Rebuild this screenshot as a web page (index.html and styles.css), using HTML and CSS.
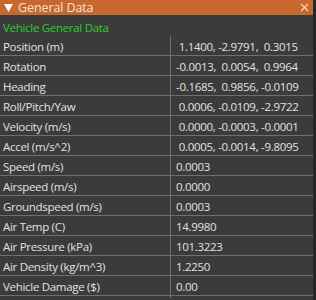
FILE: index.html
```html
<!DOCTYPE html>
<html lang="en">
<head>
    <meta charset="UTF-8">
    <title>General Data</title>
    <link rel="stylesheet" href="styles.css">
</head>
<body>
    <div class="window">
        <div class="titlebar">
            <svg class="arrow" width="9" height="8" viewBox="0 0 9 8"><polygon points="0,0 9,0 4.5,8" fill="#fff"/></svg>
            <span class="title">General Data</span>
            <svg class="close" width="9" height="9" viewBox="0 0 9 9"><path d="M1 1 L8 8 M8 1 L1 8" stroke="#f6d3b6" stroke-width="1.3"/></svg>
        </div>
        <div class="content">
            <div class="section">Vehicle General Data</div>
            <div class="table">
                <div class="row"><div class="label">Position (m)</div><div class="value"> 1.1400, -2.9791,  0.3015</div></div>
                <div class="row"><div class="label">Rotation</div><div class="value">-0.0013,  0.0054,  0.9964</div></div>
                <div class="row"><div class="label">Heading</div><div class="value">-0.1685,  0.9856, -0.0109</div></div>
                <div class="row"><div class="label">Roll/Pitch/Yaw</div><div class="value"> 0.0006, -0.0109, -2.9722</div></div>
                <div class="row"><div class="label">Velocity (m/s)</div><div class="value"> 0.0000, -0.0003, -0.0001</div></div>
                <div class="row"><div class="label">Accel (m/s^2)</div><div class="value"> 0.0005, -0.0014, -9.8095</div></div>
                <div class="row"><div class="label">Speed (m/s)</div><div class="value">0.0003</div></div>
                <div class="row"><div class="label">Airspeed (m/s)</div><div class="value">0.0000</div></div>
                <div class="row"><div class="label">Groundspeed (m/s)</div><div class="value">0.0003</div></div>
                <div class="row"><div class="label">Air Temp (C)</div><div class="value">14.9980</div></div>
                <div class="row"><div class="label">Air Pressure (kPa)</div><div class="value">101.3223</div></div>
                <div class="row"><div class="label">Air Density (kg/m^3)</div><div class="value">1.2250</div></div>
                <div class="row"><div class="label">Vehicle Damage ($)</div><div class="value">0.00</div></div>
            </div>
        </div>
    </div>
</body>
</html>
```

FILE: styles.css
```css
html, body {
    margin: 0;
    padding: 0;
}
body {
    background: #272727;
    font-family: "Open Sans", sans-serif;
    font-size: 11.5px;
    letter-spacing: -0.3px;
    color: #e2e2e2;
    height: 300px;
    overflow: hidden;
}
.window {
    width: 313px;
    height: 300px;
    background: #3b3b3b;
}
.titlebar {
    height: 15px;
    background: #c8672e;
    display: flex;
    align-items: center;
    padding: 0 0 0 4px;
    color: #f6e2d2;
    font-size: 12.5px;
    letter-spacing: -0.1px;
}
.arrow {
    flex: none;
    margin-right: 5px;
}
.title {
    flex: 1;
    line-height: 15px;
}
.close {
    flex: none;
    margin-right: 4px;
}
.section {
    height: 21px;
    line-height: 25px;
    padding-left: 3px;
    color: #2fcc2f;
}
.row {
    display: grid;
    grid-template-columns: 171px 1fr;
    height: 19px;
    border-bottom: 1px solid #707070;
    line-height: 22px;
}
.label {
    padding-left: 3px;
    border-right: 1px solid #707070;
    white-space: nowrap;
}
.value {
    padding-left: 5px;
    white-space: pre;
}
```
